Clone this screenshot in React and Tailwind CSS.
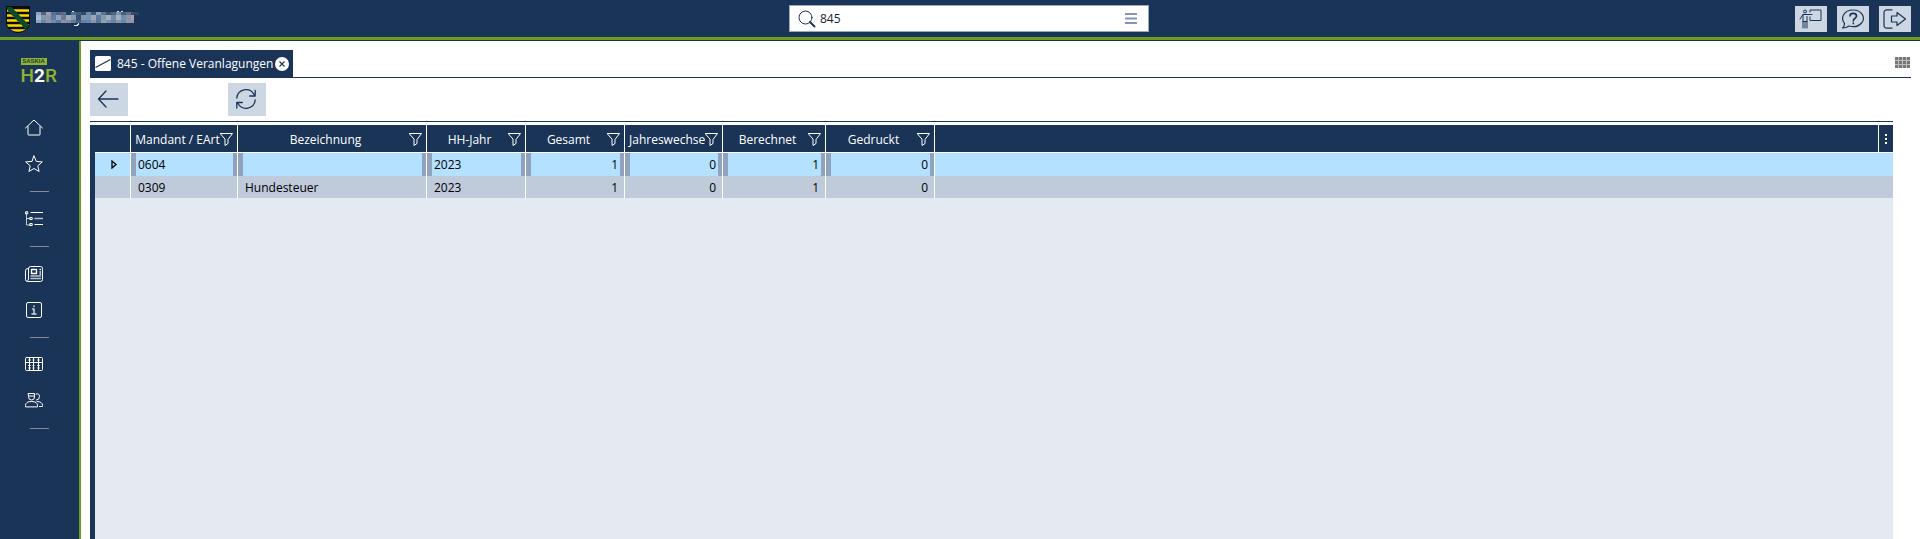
import React from 'react';

const columns = [
  { label: 'Mandant / EArt', right: false },
  { label: 'Bezeichnung', right: false },
  { label: 'HH-Jahr', right: false },
  { label: 'Gesamt', right: true },
  { label: 'Jahreswechse', right: true },
  { label: 'Berechnet', right: true },
  { label: 'Gedruckt', right: true },
];

const rows = [
  ['0604', '', '2023', '1', '0', '1', '0'],
  ['0309', 'Hundesteuer', '2023', '1', '0', '1', '0'],
];

const maskRows = [
  { y: 1, h: 3, cells: ['#8ba3bd', '#55617f', '#98a0ae', '#56708f', '#4b6382', '#5a6d8b', '#1f3a5e', '#506f93', '#3f5b7c', '#2f4a6c', '#6c88a6', '#41597a', '#8fa0b4', '#5b7391', '#35506f', '#4a6687', '#7f93a9', '#3f5f83', '#6a6f8a', '#344f70'] },
  { y: 4, h: 5, cells: ['#a9bccd', '#7799b8', '#9b8fa3', '#5c7ea4', '#8fa3b8', '#6b7a96', '#9cadbd', '#8d97a8', '#334f77', '#8294ab', '#6f93b5', '#a1a6b3', '#5a7a9f', '#8497ac', '#a2afbc', '#7188a4', '#a6b0bd', '#6a8fb3', '#8f93a8', '#a99fb0'] },
  { y: 9, h: 3, cells: ['#8fa6bd', '#6c86a4', '#8c98ab', '#708cab', '#5f7896', '#8793a8', '#7d8da3', '#5b7a9c', '#455f82', '#62809f', '#6886a6', '#8a96a9', '#5c7696', '#8fa2b6', '#7b8fa8', '#68839f', '#8494aa', '#6d88a6', '#8c9ab0', '#968fa6'] },
];

function MaskedName() {
  return (
    <svg width="104" height="16" viewBox="0 0 104 16" shapeRendering="crispEdges" aria-hidden="true">
      {maskRows.map((row) =>
        row.cells.map((fill, i) => (
          <rect key={row.y + '-' + i} x={i * 5} y={row.y} width={i === 19 ? 3 : 5} height={row.h} fill={fill} />
        ))
      )}
      <path d="M98 1h5v3h-5z" fill="#2c4668" />
      <path d="M38 14h3v-1h1v-1h1v2h-1v1h-4zM36 0h2v1h-2zM81 0h2v1h-2zM85 0h2v1h-2z" fill="#e5ebf2" />
    </svg>
  );
}

function Crest() {
  return (
    <svg width="24" height="27" viewBox="0 0 24 27" aria-hidden="true">
      <defs>
        <clipPath id="shield"><path d="M.5.5h23V17c0 5-5 9-11.500 9.500C5.500 26 .5 22 .5 17z" /></clipPath>
      </defs>
      <g clipPath="url(#shield)">
        <path d="M0 0h24v27H0z" fill="#0b0b08" />
        <path d="M0 4.500h24M0 9.500h24M0 14.500h24M0 19.500h24M0 24.500h24" stroke="#fbd800" strokeWidth="2.400" />
        <path d="M1 0L22 22" stroke="#0d4a2b" strokeWidth="5" />
        <path d="M3 0L23 20M0 2L20 23" stroke="#0d4a2b" strokeWidth="1.500" strokeDasharray="2 2" />
      </g>
      <path d="M.5.5h23V17c0 5-5 9-11.500 9.500C5.500 26 .5 22 .5 17z" fill="none" stroke="#0b0b08" />
    </svg>
  );
}

function Logo() {
  return (
    <div className="mr-0.5 flex w-9 flex-col items-start">
      <span className="flex h-[7px] w-[26px] items-center justify-center bg-[#8fb52c] font-['Liberation_Sans',sans-serif] text-[6px] leading-[7px] font-bold text-[#1a3458]">SASKIA</span>
      <span className="font-['Roboto',sans-serif] text-[19px] leading-[21px] font-medium text-[#8fb52c]">
        H<span className="font-bold text-white">2</span>R
      </span>
    </div>
  );
}

function Icon({ w = 18, h = 18, children, className = '', sw = 1 }) {
  return (
    <svg width={w} height={h} viewBox={`0 0 ${w} ${h}`} fill="none" stroke="currentColor" strokeWidth={sw} strokeLinejoin="round" strokeLinecap="round" className={className} aria-hidden="true">
      {children}
    </svg>
  );
}

const Funnel = () => (
  <Icon w={13} h={13} className="shrink-0"><path d="M.5.5h12L8 6.500V10.500L5 12.500v-6z" /></Icon>
);

function NavItem({ label, children }) {
  return (
    <a href="#" aria-label={label} className="flex h-9 w-full items-center justify-center pr-[11px] text-white">{children}</a>
  );
}

const Divider = () => <div className="my-[9px] h-px w-[19px] bg-[#878b91]" />;

function HeaderButton({ label, children }) {
  return (
    <button type="button" aria-label={label} className="flex h-[26px] w-8 items-center justify-center bg-[#cdd6e3] text-[#1a3458]">{children}</button>
  );
}

function ToolButton({ label, children }) {
  return (
    <button type="button" aria-label={label} className="flex h-[33px] w-[38px] items-center justify-center bg-[#cdd6e3] pr-0.5 pb-0.5 text-[#1a3458]">{children}</button>
  );
}

export default function App() {
  return (
    <div className="flex h-screen flex-col overflow-hidden bg-white font-['Open_Sans',sans-serif] text-[12px] text-black">
      <header className="flex h-[41px] shrink-0 flex-col border-b border-[#1a3458] bg-[#1a3458]">
        <div className="grid flex-1 grid-cols-[789fr_360px_771fr] items-center">
          <div className="flex items-center gap-1.5 pt-px pl-1.5">
            <Crest />
            <MaskedName />
          </div>
          <label className="flex h-[27px] items-center border border-[#9aa9c3] bg-white pr-[11px] pl-2 text-[#1a3458]">
            <Icon w={18} h={18} className="shrink-0">
              <circle cx="7.500" cy="7.500" r="6.500" />
              <path d="M12 12l4.500 4.500" strokeWidth="2" />
            </Icon>
            <input aria-label="Suche" defaultValue="845" className="ml-1 min-w-0 flex-1 text-[12px] text-[#1b2433] outline-none" />
            <Icon w={12} h={11} className="text-[#8496b3]"><path d="M0 1h12M0 5.500h12M0 10h12" strokeWidth="2" strokeLinecap="butt" /></Icon>
          </label>
          <div className="flex justify-end gap-2.5 pr-[9px]">
            <HeaderButton label="Schulung">
              <Icon w={24} h={20}>
                <circle cx="6" cy="2.500" r="1.500" />
                <path d="M1 10l3-4.500h9M4 5.500V19M8 7.500V19M4 12.500h4M6 12.500V19M11 3V1h11v10.500H11V8" />
              </Icon>
            </HeaderButton>
            <HeaderButton label="Hilfe">
              <Icon w={24} h={20} sw={1.2}>
                <path d="M3.500 14.500C-1 9 3 1 12 1s13 8 8.500 13c-3.500 4-9 4-12.500 3-2 1.500-4 2-6.500 2 1.500-1 2-2.500 2-4.500z" />
                <path d="M9 7c0-3.500 6.500-3.500 6.500 0 0 2.500-3.200 2-3.200 5M12.300 14v.8" strokeWidth="1.600" />
              </Icon>
            </HeaderButton>
            <HeaderButton label="Abmelden">
              <Icon w={24} h={20} sw={1.2}>
                <path d="M9 .8H4Q1 .8 1 4v12q0 3.200 3 3.200h5" />
                <path d="M8.500 7H14V3.500L22.500 10 14 16.500V13H8.500z" />
              </Icon>
            </HeaderButton>
          </div>
        </div>
        <div className="h-[3px] bg-[#6f9c22]" />
      </header>

      <div className="flex min-h-0 flex-1">
        <nav aria-label="Hauptmenü" className="flex w-[81px] shrink-0 flex-col items-center border-r-2 border-[#6f9c22] bg-[#1a3458] pt-[17px]">
          <Logo />
          <div className="h-6" />
          <NavItem label="Start">
            <Icon><path d="M.5 9L9 1l8.500 8M3 7.500v8q0 .5.500.5h11q.5 0 .5-.5v-8" /></Icon>
          </NavItem>
          <NavItem label="Favoriten">
            <Icon><path d="M9 1l2.300 5.400 6 .5-4.500 3.900 1.300 5.700L9 13.500l-5.100 3 1.300-5.700L.7 6.900l6-.5z" /></Icon>
          </NavItem>
          <Divider />
          <NavItem label="Struktur">
            <Icon>
              <path d="M1.500 3v12h4M2 8.500h3" strokeOpacity=".75" />
              <path d="M.8 1.800h2v2h-2zM5.200 7.500h2v2h-2zM5.200 13.500h2v2h-2z" />
              <path d="M6 2.500h11.500M10 14.500h7.500" strokeWidth="1.200" />
              <path d="M10 8.500h7.500" strokeWidth="1.600" strokeOpacity=".7" />
            </Icon>
          </NavItem>
          <Divider />
          <NavItem label="Nachrichten">
            <Icon>
              <path d="M3.500 3.500q0-2 2-2h10q2 0 2 2v11q0 2-2 2h-13q-2 0-2-2V5.500q0-2 3-2v10.500q0 1.500-1 2" />
              <path d="M6.500 4.500h5v4h-5z" strokeWidth="1.300" />
              <path d="M15 4.500h.5M15 7h.5M15 9h.5" strokeWidth="1.300" />
              <path d="M6 11h9.500M6 13.500h9.500" strokeWidth="1.600" strokeOpacity=".7" />
            </Icon>
          </NavItem>
          <NavItem label="Info">
            <Icon>
              <rect x="1.500" y="1.500" width="15" height="15" rx="1.500" />
              <path d="M9 5v.6M7.500 8H9v5M7 13h4" strokeWidth="1.500" strokeOpacity=".8" />
            </Icon>
          </NavItem>
          <Divider />
          <NavItem label="Tabellen">
            <Icon>
              <rect x=".5" y="1.500" width="17" height="13" rx="1" />
              <path d="M.5 6.500h17M4.500 1.500v13M8.500 1.500v13M13.500 1.500v13" />
              <path d="M3 4h3M7.500 4h2M12 4h3M3 9.500h3M7.500 9.500h2M12 9.500h3M3 12h3M7.500 12h2M12 12h3" strokeWidth=".8" strokeLinecap="butt" />
            </Icon>
          </NavItem>
          <NavItem label="Benutzer">
            <Icon>
              <path d="M3.500 1.500h6V5q0 3-3 3t-3-3zM3.500 4h6M.5 14.500v-1q0-4 6-4t6 4v1zM11 2q3.500-1 3.500 2.500T11.500 8M12 9.500q5.500 0 5.500 4v1h-3" />
            </Icon>
          </NavItem>
          <Divider />
        </nav>

        <main className="flex min-w-0 flex-1 flex-col px-[9px] pt-[9px]">
          <div className="flex h-7 shrink-0 items-start justify-between border-b border-[#1a3458]">
            <div className="flex h-[27px] items-center bg-[#1a3458] pr-1 pl-[5px] text-white">
              <svg width="16" height="15" viewBox="0 0 16 15" aria-hidden="true">
                <rect width="16" height="15" rx="1.500" fill="white" />
                <path d="M.5 11.500L15.500 3.500" stroke="#1a3458" strokeWidth="1.200" />
              </svg>
              <span className="ml-1.5">845 - Offene Veranlagungen</span>
              <button type="button" aria-label="Tab schließen" className="ml-0.5">
                <svg width="14" height="14" viewBox="0 0 14 14" className="block" aria-hidden="true">
                  <circle cx="7" cy="7" r="7" fill="white" />
                  <path d="M4.500 4.500l5 5M9.500 4.500l-5 5" stroke="#1a3458" strokeWidth="1.100" />
                </svg>
              </button>
            </div>
            <button type="button" aria-label="Ansicht" className="mt-[7px] mr-px">
              <svg width="15" height="11" viewBox="0 0 15 11" className="block" aria-hidden="true">
                <path d="M0 0h15v11H0z" fill="#bdbdbd" />
                <path d="M0 1.500h15M0 5.500h15M0 9.500h15" stroke="#777" strokeWidth="3" strokeDasharray="3 1" />
              </svg>
            </button>
          </div>

          <div className="mr-[18px] flex min-h-0 flex-1 flex-col">
            <div className="flex h-11 shrink-0 gap-[100px] border-b border-[#1a3458] pt-[5px]">
              <ToolButton label="Zurück">
                <Icon w={22} h={18} sw={1.3}><path d="M1.500 9H21M9 1L1.500 9 9 17" /></Icon>
              </ToolButton>
              <ToolButton label="Aktualisieren">
                <Icon w={20} h={20} sw={1.3}>
                  <path d="M.8 9A9.200 9.200 0 0 1 18 5.500M19.200 1.500V7h-5.500M19.200 11A9.200 9.200 0 0 1 2 14.500M.8 19v-5.500h5.500" />
                </Icon>
              </ToolButton>
            </div>

            <div className="mt-[3px] min-h-0 flex-1 bg-[#e5e9f2]">
              <div className="h-full border-l-[5px] border-[#1a3458]">
                <table className="w-full table-fixed border-separate border-spacing-0">
                  <colgroup>
                    <col className="w-9" />
                    <col className="w-[107px]" />
                    <col className="w-[189px]" />
                    <col className="w-[99px]" />
                    <col className="w-[99px]" />
                    <col className="w-[98px]" />
                    <col className="w-[103px]" />
                    <col className="w-[109px]" />
                    <col />
                    <col className="w-[14px]" />
                  </colgroup>
                  <thead>
                    <tr className="h-7 bg-[#1a3458] text-white">
                      <th className="border-r border-b border-white p-0" />
                      {columns.map((c) => (
                        <th key={c.label} scope="col" className="border-r border-b border-white p-0 font-normal">
                          <div className="flex items-center px-1 pt-0.5">
                            <span className="min-w-0 flex-1 text-center whitespace-nowrap">{c.label}</span>
                            <Funnel />
                          </div>
                        </th>
                      ))}
                      <th className="border-r border-b border-white p-0" />
                      <th className="border-b border-white p-0">
                        <button type="button" aria-label="Spaltenmenü" className="mx-auto block">
                          <svg width="2" height="10" viewBox="0 0 2 10" fill="white" className="block" aria-hidden="true">
                            <path d="M0 0h2v2H0zM0 4h2v2H0zM0 8h2v2H0z" />
                          </svg>
                        </button>
                      </th>
                    </tr>
                  </thead>
                  <tbody>
                    {rows.map((r, i) => (
                      <tr key={r[0]} className={i === 0 ? 'bg-[#b3e1ff]' : 'bg-[#bfcadb]'}>
                        <td className="border-r border-white p-0">
                          {i === 0 && (
                            <svg width="6" height="9" viewBox="0 0 6 9" fill="none" stroke="black" strokeWidth="1.300" className="ml-4 block" aria-hidden="true">
                              <path d="M1 1v7l4-3.500z" />
                            </svg>
                          )}
                        </td>
                        {r.map((v, j) => (
                          <td key={j} className={'border-r border-white p-0 ' + (columns[j].right ? 'text-right' : 'text-left')}>
                            <div className={i === 0 ? 'h-[23px] border-r-4 border-l-[5px] border-[#91a2bf] px-0.5 leading-[23px]' : 'h-[22px] pt-px pr-1.5 pl-[7px] leading-[22px]'}>{v}</div>
                          </td>
                        ))}
                        <td className="p-0" colSpan={2} />
                      </tr>
                    ))}
                  </tbody>
                </table>
              </div>
            </div>
          </div>
        </main>
      </div>
    </div>
  );
}
